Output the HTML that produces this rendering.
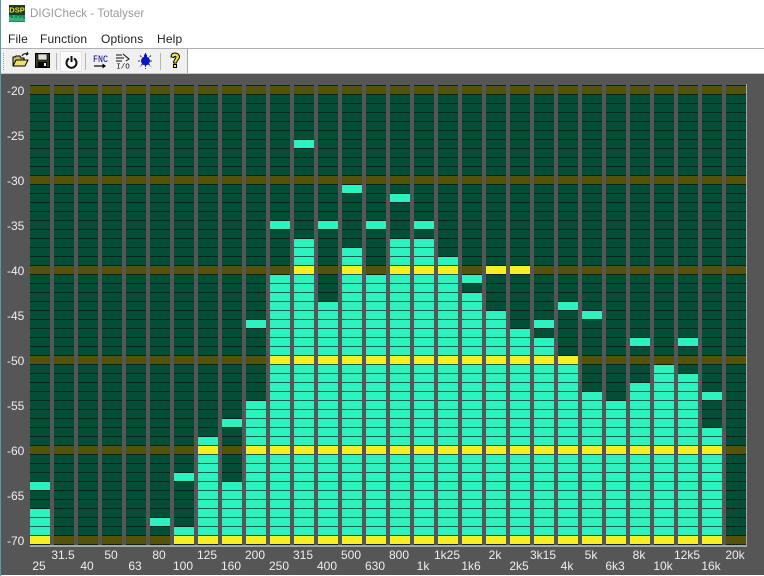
<!DOCTYPE html>
<html>
<head>
<meta charset="utf-8">
<title>DIGICheck - Totalyser</title>
<style>
html,body{margin:0;padding:0;background:#fff}
#app{position:relative;width:764px;height:576px;overflow:hidden;background:#fff;font-family:"Liberation Sans",sans-serif}
.a{position:absolute}
.t{position:absolute;white-space:nowrap;font-size:12px;line-height:14px}
.m{color:#222;font-size:12px;letter-spacing:.15px;top:32px}
#plot{position:absolute;left:0;top:74px;width:764px;height:501px;background:#565656}
.c{position:absolute;top:12px;width:20px;height:459px;
background:linear-gradient(transparent 81px,#55520a 81px,#55520a 89px,transparent 89px) 0 100%/100% 90px repeat-y,
linear-gradient(#024e36 8px,#07251c 8px) 0 100%/100% 9px}
.c::before{content:"";position:absolute;left:0;right:0;top:-1px;height:1px;background:#07251c}
.b{position:absolute;left:0;right:0;bottom:1px;
background:linear-gradient(transparent 81px,#f6ef22 81px,#f6ef22 89px,transparent 89px) 0 calc(100% + 1px)/100% 90px repeat-y,
linear-gradient(#2cf2c0 8px,#0f5f4c 8px) 0 calc(100% + 1px)/100% 9px}
.p{position:absolute;left:0;right:0;height:8px;background:#2cf2c0}
.p.y{background:#f6ef22}
.d{position:absolute;left:7px;color:#eee;font-size:12px;line-height:14px}
.l{position:absolute;width:40px;text-align:center;color:#eee;font-size:12px;line-height:14px}
.sep{position:absolute;top:53px;width:1px;height:17px;background:#b4b4b4}
svg{position:absolute;overflow:visible}
</style>
</head>
<body>
<div id="app">

<svg style="left:9px;top:5px" width="16" height="17" viewBox="0 0 16 17">
<rect width="16" height="17" fill="#1c3a2c"/>
<rect y="10" width="16" height="7" fill="#1b8a5a"/>
<path d="M1 16V12M3 16V13M5 16V10M7 16V13M9 16V11M11 16V13M13 16V12M15 16V14" stroke="#53d69a" stroke-width="1"/>
<text x="8" y="7.5" text-anchor="middle" font-family="Liberation Sans" font-weight="bold" font-size="7.5" fill="#e8e020">DSP</text>
</svg>
<div class="t" style="left:30px;top:7px;color:#9a9a9a;font-size:11.6px;letter-spacing:.05px">DIGICheck - Totalyser</div>

<div class="t m" style="left:8px">File</div>
<div class="t m" style="left:40px">Function</div>
<div class="t m" style="left:101px">Options</div>
<div class="t m" style="left:157px">Help</div>

<div class="a" style="left:0;top:48px;width:764px;height:1px;background:#b0b0b0"></div>
<div class="a" style="left:1px;top:49px;width:186px;height:24px;background:#f0f0f0"></div>
<div class="a" style="left:187px;top:49px;width:1px;height:24px;background:#a8a8a8"></div>
<div class="a" style="left:0;top:73px;width:764px;height:1px;background:#c4c4c4"></div>
<div class="a" style="left:3px;top:53px;width:1px;height:17px;border-left:1px dotted #a0a0a0"></div>

<svg style="left:12px;top:52px" width="18" height="16" viewBox="0 0 18 16">
<path d="M1 14V5h2l1-1h4l1 2h3v2" fill="#c8c060" stroke="#000"/>
<path d="M1 14l3-6h12l-3 6z" fill="#e8e070" stroke="#000" stroke-linejoin="round"/>
<path d="M10 4c1-2 3-3 5-2M15 0l1 2-2 1" fill="none" stroke="#000"/>
</svg>
<svg style="left:35px;top:53px" width="15" height="15" viewBox="0 0 15 15">
<rect x=".5" y=".5" width="14" height="14" fill="#3a3a10" stroke="#000"/>
<rect x="3" y="1" width="9" height="6" fill="#ddd" stroke="#000" stroke-width=".6"/>
<rect x="3" y="9" width="9" height="5" fill="#000"/>
<rect x="9" y="10" width="2" height="3" fill="#eee"/>
</svg>
<div class="sep" style="left:56px"></div>

<div class="a" style="left:60px;top:51px;width:22px;height:21px;background:#fafafa;border:1px solid #e4e4e4;box-sizing:border-box"></div>
<svg style="left:65px;top:55px" width="13" height="14" viewBox="0 0 13 14">
<path d="M4 3.5A5 5 0 1 0 9 3.5" fill="none" stroke="#111" stroke-width="2"/>
<path d="M6.5 1V7" stroke="#111" stroke-width="2"/>
</svg>
<div class="sep" style="left:85px"></div>

<svg style="left:92px;top:53px" width="16" height="16" viewBox="0 0 16 16">
<text x="1" y="9" font-family="Liberation Mono" font-size="10" fill="#00008c" textLength="15" lengthAdjust="spacingAndGlyphs">FNC</text>
<path d="M2 13H13" stroke="#000" stroke-width="1.2"/>
<path d="M10.500 10.500L14 13L10.500 15.500z" fill="#000"/>
</svg>
<svg style="left:115px;top:53px" width="16" height="16" viewBox="0 0 16 16">
<path d="M1 2H7M1 5H9M1 8H7M8 1L14 6L11 8" fill="none" stroke="#111" stroke-width="1"/>
<text x="8" y="15.500" text-anchor="middle" font-family="Liberation Mono" font-size="7.500" fill="#111">I/O</text>
</svg>
<svg style="left:137px;top:53px" width="17" height="16" viewBox="0 0 17 16">
<path d="M8.500 0V16M1 8H16M3 2.500L14 13.500M14 2.500L3 13.500" stroke="#333" stroke-width="1" stroke-dasharray="2 1"/>
<circle cx="8.500" cy="8" r="4.500" fill="#0a14c8"/>
<rect x="7" y="1.500" width="3" height="3" fill="#0a14c8"/>
</svg>
<div class="sep" style="left:160px"></div>

<svg style="left:169px;top:52px" width="12" height="17" viewBox="0 0 12 17">
<path d="M2 5C2 2 4 1 6 1C9 1 10.500 3 10.500 5C10.500 7.500 7.500 8 7.500 11H4.500C4.500 7.500 7 7 7 5C7 4 5 4 5 5.500Z" fill="#f4ec30" stroke="#000" stroke-width="1"/>
<rect x="4.500" y="12.500" width="3" height="3" fill="#f4ec30" stroke="#000"/>
</svg>

<div id="plot">
<div class="d" style="top:10px">-20</div>
<div class="d" style="top:55px">-25</div>
<div class="d" style="top:100px">-30</div>
<div class="d" style="top:145px">-35</div>
<div class="d" style="top:190px">-40</div>
<div class="d" style="top:235px">-45</div>
<div class="d" style="top:280px">-50</div>
<div class="d" style="top:325px">-55</div>
<div class="d" style="top:370px">-60</div>
<div class="d" style="top:415px">-65</div>
<div class="d" style="top:460px">-70</div>

<div class="c" style="left:30px"><div class="b" style="top:423px"></div><div class="p" style="top:396px"></div></div>
<div class="c" style="left:54px"></div>
<div class="c" style="left:78px"></div>
<div class="c" style="left:102px"></div>
<div class="c" style="left:126px"></div>
<div class="c" style="left:150px"><div class="p" style="top:432px"></div></div>
<div class="c" style="left:174px"><div class="b" style="top:441px"></div><div class="p" style="top:387px"></div></div>
<div class="c" style="left:198px"><div class="b" style="top:351px"></div></div>
<div class="c" style="left:222px"><div class="b" style="top:396px"></div><div class="p" style="top:333px"></div></div>
<div class="c" style="left:246px"><div class="b" style="top:315px"></div><div class="p" style="top:234px"></div></div>
<div class="c" style="left:270px"><div class="b" style="top:189px"></div><div class="p" style="top:135px"></div></div>
<div class="c" style="left:294px"><div class="b" style="top:153px"></div><div class="p" style="top:54px"></div></div>
<div class="c" style="left:318px"><div class="b" style="top:216px"></div><div class="p" style="top:135px"></div></div>
<div class="c" style="left:342px"><div class="b" style="top:162px"></div><div class="p" style="top:99px"></div></div>
<div class="c" style="left:366px"><div class="b" style="top:189px"></div><div class="p" style="top:135px"></div></div>
<div class="c" style="left:390px"><div class="b" style="top:153px"></div><div class="p" style="top:108px"></div></div>
<div class="c" style="left:414px"><div class="b" style="top:153px"></div><div class="p" style="top:135px"></div></div>
<div class="c" style="left:438px"><div class="b" style="top:171px"></div></div>
<div class="c" style="left:462px"><div class="b" style="top:207px"></div><div class="p" style="top:189px"></div></div>
<div class="c" style="left:486px"><div class="b" style="top:225px"></div><div class="p y" style="top:180px"></div></div>
<div class="c" style="left:510px"><div class="b" style="top:243px"></div><div class="p y" style="top:180px"></div></div>
<div class="c" style="left:534px"><div class="b" style="top:252px"></div><div class="p" style="top:234px"></div></div>
<div class="c" style="left:558px"><div class="b" style="top:270px"></div><div class="p" style="top:216px"></div></div>
<div class="c" style="left:582px"><div class="b" style="top:306px"></div><div class="p" style="top:225px"></div></div>
<div class="c" style="left:606px"><div class="b" style="top:315px"></div></div>
<div class="c" style="left:630px"><div class="b" style="top:297px"></div><div class="p" style="top:252px"></div></div>
<div class="c" style="left:654px"><div class="b" style="top:279px"></div></div>
<div class="c" style="left:678px"><div class="b" style="top:288px"></div><div class="p" style="top:252px"></div></div>
<div class="c" style="left:702px"><div class="b" style="top:342px"></div><div class="p" style="top:306px"></div></div>
<div class="c" style="left:726px"></div>

<div class="a" style="left:30px;top:471px;width:717px;height:2px;background:#a4a4a4"></div>
<div class="a" style="left:746px;top:10px;width:1px;height:463px;background:#a4a4a4"></div>

<div class="l" style="left:19px;top:485px">25</div>
<div class="l" style="left:43px;top:474px">31.5</div>
<div class="l" style="left:67px;top:485px">40</div>
<div class="l" style="left:91px;top:474px">50</div>
<div class="l" style="left:115px;top:485px">63</div>
<div class="l" style="left:139px;top:474px">80</div>
<div class="l" style="left:163px;top:485px">100</div>
<div class="l" style="left:187px;top:474px">125</div>
<div class="l" style="left:211px;top:485px">160</div>
<div class="l" style="left:235px;top:474px">200</div>
<div class="l" style="left:259px;top:485px">250</div>
<div class="l" style="left:283px;top:474px">315</div>
<div class="l" style="left:307px;top:485px">400</div>
<div class="l" style="left:331px;top:474px">500</div>
<div class="l" style="left:355px;top:485px">630</div>
<div class="l" style="left:379px;top:474px">800</div>
<div class="l" style="left:403px;top:485px">1k</div>
<div class="l" style="left:427px;top:474px">1k25</div>
<div class="l" style="left:451px;top:485px">1k6</div>
<div class="l" style="left:475px;top:474px">2k</div>
<div class="l" style="left:499px;top:485px">2k5</div>
<div class="l" style="left:523px;top:474px">3k15</div>
<div class="l" style="left:547px;top:485px">4k</div>
<div class="l" style="left:571px;top:474px">5k</div>
<div class="l" style="left:595px;top:485px">6k3</div>
<div class="l" style="left:619px;top:474px">8k</div>
<div class="l" style="left:643px;top:485px">10k</div>
<div class="l" style="left:667px;top:474px">12k5</div>
<div class="l" style="left:691px;top:485px">16k</div>
<div class="l" style="left:715px;top:474px">20k</div>
</div>
<div class="a" style="left:0;top:0;width:1px;height:576px;background:#5a9aa8"></div>
</div>
</body>
</html>
